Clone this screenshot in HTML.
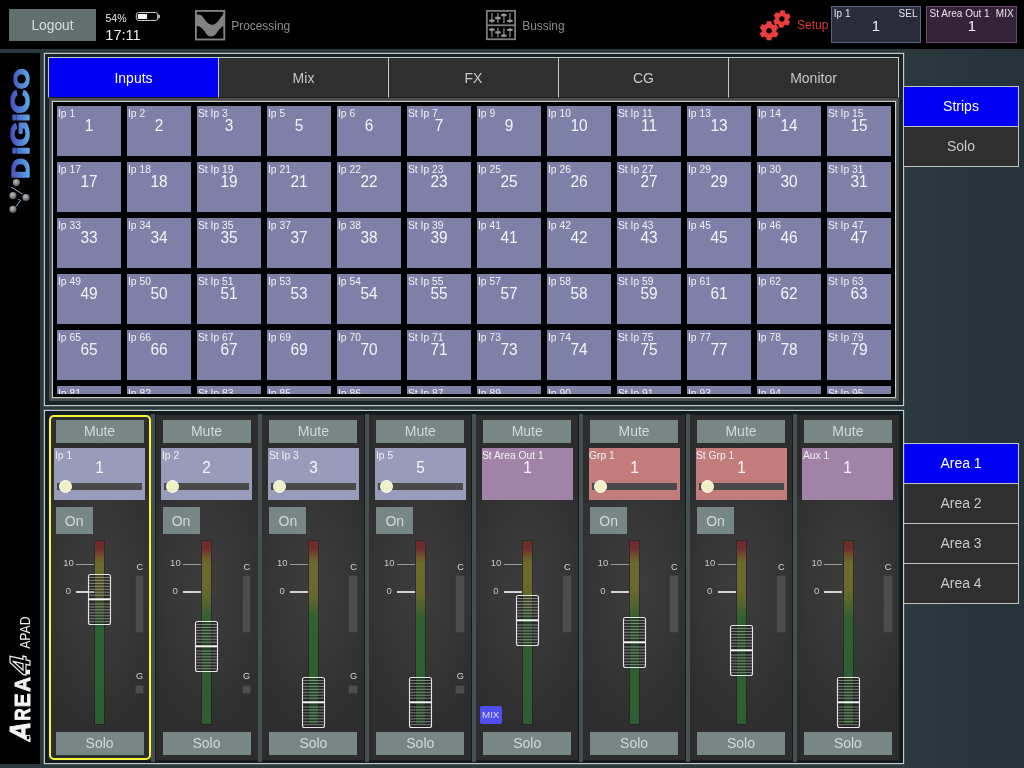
<!DOCTYPE html>
<html lang="en"><head><meta charset="utf-8"><title>DiGiCo Area4 aPad</title>
<style>
html,body{margin:0;padding:0}
body{will-change:transform;width:1024px;height:768px;overflow:hidden;position:relative;background:linear-gradient(90deg,#2b3a3f 0,#2b3a3f 88%,#243339 100%);font-family:"Liberation Sans",Arial,Helvetica,sans-serif;}
div{box-sizing:border-box}
.t{position:absolute;white-space:nowrap}
.btn{position:absolute;background:#778785;color:#d2d9d8;text-align:center}
.cell{position:absolute;width:64px;height:50px;background:#7f80a7}
.cl{left:1.4px;top:1.7px;font-size:10.2px;line-height:12px;color:#f0f0f6;transform:scaleX(1.01);transform-origin:0 0}
.cn{left:0;width:64px;text-align:center;top:9.9px;font-size:16.6px;line-height:20px;color:#f4f4f8;transform:scaleX(.93)}
.sb{position:absolute;left:903px;width:116px;height:41px;border:1px solid #bfc3c3;background:#2e2f2e;color:#c9c9c9;font-size:14px;line-height:39px;text-align:center}
.sb.on{background:#0000f5;color:#fff}
.tab{position:absolute;top:57px;height:41px;width:171px;border:1px solid #c4c8c8;border-bottom:1px solid #202222;background:#2e2f2e;color:#c9c9c9;font-size:14px;line-height:40px;text-align:center}
.tab.on{background:#0000f5;color:#fff}
.strip{position:absolute;top:415px;width:102px;height:345px;background:radial-gradient(ellipse 70px 150px at 50% 50%,#3d3d3d 0,#353535 60%,#2d2d2d 100%)}
.sep{position:absolute;top:414px;width:4px;height:348px;background:#464f52}
</style></head><body>

<div style="position:absolute;left:0px;top:0px;width:1024px;height:49px;background:#000"></div>
<div style="position:absolute;left:0px;top:53px;width:40px;height:711px;background:#000"></div>
<div class="btn" style="left:9px;top:9px;width:87px;height:31.5px;background:#5f706f;color:#d9dedd;font-size:13.8px;line-height:33px">Logout</div>
<div class="t" style="left:105.5px;top:12.06px;font-size:10.5px;line-height:13px;color:#e8e8e8;">54%</div>
<div class="t" style="left:105.3px;top:25.64px;font-size:14.6px;line-height:18px;color:#f0f0f0;">17:11</div>
<svg style="position:absolute;left:134px;top:10px" width="28" height="13" viewBox="0 0 28 13"><rect x="2.3" y="2.5" width="21.4" height="8" rx="2.3" fill="none" stroke="#c9c9c9" stroke-width="1"/><rect x="3.8" y="4" width="9.3" height="5" rx="0.8" fill="#f4f4f4"/><path d="M24.2 4.6 h0.6 a1 1 0 0 1 1 1 v1.8 a1 1 0 0 1 -1 1 h-0.6z" fill="#d8d8d8"/></svg>
<svg style="position:absolute;left:194px;top:9px" width="33" height="33" viewBox="0 0 33 33"><path d="M1.5 5.4 L4.5 5.4 C8.5 5.4 10 10 12.5 12.8 C14.5 15 16.5 15.8 18.4 15.8 C22 15.8 25 11 27.5 7.5 C28.8 5.8 29.8 4.8 30.5 3.2 L30.5 16.8 C27 17.5 24.5 21.5 22.5 24.2 C20.8 26.5 19 27.5 16.8 27.5 C14.2 27.5 12.6 25.5 11 23 C9 20 6.5 16.8 1.5 16.8 Z" fill="#828282"/><rect x="1.9" y="1.9" width="28.4" height="28.6" fill="none" stroke="#828282" stroke-width="1.9"/></svg>
<div class="t" style="left:231.3px;top:18.78px;font-size:11.9px;line-height:14px;color:#8d8d8d;">Processing</div>
<svg style="position:absolute;left:485px;top:9px" width="33" height="33" viewBox="0 0 33 33"><g fill="none" stroke="#7e7e7e" stroke-width="1.8"><rect x="1.85" y="1.85" width="28.25" height="28.4"/><path d="M1.85 16.3h28.25"/></g><g stroke="#6c6c6c" stroke-width="1.6"><path d="M6.9 4.1v9.9"/><path d="M6.9 18.7v9.6"/><path d="M12.9 4.1v9.9"/><path d="M12.9 18.7v9.6"/><path d="M18.9 4.1v9.9"/><path d="M18.9 18.7v9.6"/><path d="M24.9 4.1v9.9"/><path d="M24.9 18.7v9.6"/></g><g fill="#969696"><rect x="4.15" y="10.45" width="5.5" height="2.3" rx="0.6"/><rect x="4.15" y="19.55" width="5.5" height="2.3" rx="0.6"/><rect x="10.15" y="7.85" width="5.5" height="2.3" rx="0.6"/><rect x="10.15" y="22.25" width="5.5" height="2.3" rx="0.6"/><rect x="16.15" y="5.05" width="5.5" height="2.3" rx="0.6"/><rect x="16.15" y="25.45" width="5.5" height="2.3" rx="0.6"/><rect x="22.15" y="10.75" width="5.5" height="2.3" rx="0.6"/><rect x="22.15" y="19.75" width="5.5" height="2.3" rx="0.6"/></g></svg>
<div class="t" style="left:522.3px;top:18.78px;font-size:11.9px;line-height:14px;color:#8d8d8d;">Bussing</div>
<svg style="position:absolute;left:756px;top:6px" width="40" height="40" viewBox="756 6 40 40"><g fill="#ec3e3e" fill-rule="evenodd" stroke="#ec3e3e" stroke-width="1.2" stroke-linejoin="round"><path d="M772.50 36.69 L771.20 37.27 L770.99 39.70 L767.21 39.70 L767.00 37.27 L765.70 36.69 L764.55 35.85 L762.34 36.89 L760.45 33.61 L762.45 32.21 L762.30 30.80 L762.45 29.39 L760.45 27.99 L762.34 24.71 L764.55 25.75 L765.70 24.91 L767.00 24.33 L767.21 21.90 L770.99 21.90 L771.20 24.33 L772.50 24.91 L773.65 25.75 L775.86 24.71 L777.75 27.99 L775.75 29.39 L775.90 30.80 L775.75 32.21 L777.75 33.61 L775.86 36.89 L773.65 35.85Z M765.75 30.80 a3.35 3.35 0 1 0 6.7 0 a3.35 3.35 0 1 0 -6.7 0Z"/><path d="M784.50 24.63 L783.28 25.04 L782.89 27.24 L779.45 26.93 L779.46 24.70 L778.33 24.07 L777.35 23.22 L775.26 23.98 L773.81 20.84 L775.74 19.74 L775.73 18.44 L775.98 17.17 L774.27 15.74 L776.26 12.91 L778.18 14.04 L779.30 13.37 L780.52 12.96 L780.91 10.76 L784.35 11.07 L784.34 13.30 L785.47 13.93 L786.45 14.78 L788.54 14.02 L789.99 17.16 L788.06 18.26 L788.07 19.56 L787.82 20.83 L789.53 22.26 L787.54 25.09 L785.62 23.96Z M778.60 19.00 a3.3 3.3 0 1 0 6.6 0 a3.3 3.3 0 1 0 -6.6 0Z"/></g></svg>
<div class="t" style="left:797px;top:17.74px;font-size:12px;line-height:14px;color:#d93a3a;">Setup</div>
<div style="position:absolute;left:831px;top:6px;width:90px;height:37px;background:#2a2c3c;border:1px solid #5e638c"></div>
<div class="t" style="left:833.8px;top:7.64px;font-size:10px;line-height:12px;color:#e6e6ea;">Ip 1</div>
<div class="t" style="left:717.5px;width:200px;top:7.64px;font-size:10px;line-height:12px;color:#e6e6ea;text-align:right;">SEL</div>
<div class="t" style="left:776.0px;width:200px;top:17.40px;font-size:15px;line-height:18px;color:#f2f2f2;text-align:center;">1</div>
<div style="position:absolute;left:926px;top:6px;width:91px;height:37px;background:#35233a;border:1px solid #6e4a73"></div>
<div class="t" style="left:929.6px;top:7.64px;font-size:10px;line-height:12px;color:#e6e6ea;">St Area Out 1</div>
<div class="t" style="left:813.6px;width:200px;top:7.64px;font-size:10px;line-height:12px;color:#e6e6ea;text-align:right;">MIX</div>
<div class="t" style="left:872.0px;width:200px;top:17.40px;font-size:15px;line-height:18px;color:#f2f2f2;text-align:center;">1</div>
<svg style="position:absolute;left:0;top:56px" width="40" height="170" viewBox="0 56 40 170"><defs><linearGradient id="lg" gradientUnits="userSpaceOnUse" x1="0" y1="-20" x2="0" y2="0"><stop offset="0" stop-color="#4a46b8"/><stop offset="0.5" stop-color="#4c74cc"/><stop offset="1" stop-color="#5ea6e2"/></linearGradient><radialGradient id="ball" cx="0.4" cy="0.35" r="0.7"><stop offset="0" stop-color="#bdbdbd"/><stop offset="0.6" stop-color="#808080"/><stop offset="1" stop-color="#444"/></radialGradient></defs><text transform="translate(28.7 178.8) rotate(-90) scale(1.22 1)" font-family="Liberation Sans, Arial, sans-serif" font-weight="bold" font-size="23.4" fill="url(#lg)" stroke="url(#lg)" stroke-width="1.4" stroke-linejoin="round">D</text><text transform="translate(28.7 154.8) rotate(-90) scale(1.36 1)" font-family="Liberation Sans, Arial, sans-serif" font-weight="bold" font-size="21.6" fill="url(#lg)" stroke="url(#lg)" stroke-width="1.4" stroke-linejoin="round">i</text><text transform="translate(28.7 146.5) rotate(-90) scale(1.27 1)" font-family="Liberation Sans, Arial, sans-serif" font-weight="bold" font-size="25.4" fill="url(#lg)" stroke="url(#lg)" stroke-width="1.4" stroke-linejoin="round">G</text><text transform="translate(28.7 121.4) rotate(-90) scale(1.36 1)" font-family="Liberation Sans, Arial, sans-serif" font-weight="bold" font-size="21.6" fill="url(#lg)" stroke="url(#lg)" stroke-width="1.4" stroke-linejoin="round">i</text><text transform="translate(28.7 113.4) rotate(-90) scale(1.3 1)" font-family="Liberation Sans, Arial, sans-serif" font-weight="bold" font-size="25.4" fill="url(#lg)" stroke="url(#lg)" stroke-width="1.4" stroke-linejoin="round">C</text><text transform="translate(28.7 89.2) rotate(-90) scale(1.22 1)" font-family="Liberation Sans, Arial, sans-serif" font-weight="bold" font-size="21.8" fill="url(#lg)" stroke="url(#lg)" stroke-width="1.4" stroke-linejoin="round">O</text><g stroke="#8fb0d8" stroke-width="1" fill="none"><path d="M11.2 187 L22.6 194.2"/><path d="M18.4 199.3 L20.6 200.3 L16.2 206.3"/></g><g fill="url(#ball)"><circle cx="16.4" cy="182.6" r="3.6"/><circle cx="13" cy="195.6" r="3.6"/><circle cx="26" cy="197.5" r="3.6"/><circle cx="13" cy="209.3" r="3.6"/></g></svg>
<svg style="position:absolute;left:0;top:606px" width="40" height="150" viewBox="0 606 40 150"><text transform="translate(30.4 648.8) rotate(-90) scale(0.86 1)" font-family="Liberation Sans, Arial, sans-serif" font-weight="normal" font-size="14.2" fill="#f2f2f2" >APAD</text><text transform="translate(29.8 674.4) rotate(-90) scale(1.18 1)" font-family="Liberation Sans, Arial, sans-serif" font-weight="bold" font-size="29" fill="none" stroke="#f2f2f2" stroke-width="1.1" font-style="italic">4</text><rect x="26" y="669.8" width="4" height="4.6" fill="#f2f2f2"/><text transform="translate(30 691.8) rotate(-90) scale(0.93 1)" font-family="Liberation Sans, Arial, sans-serif" font-weight="bold" font-size="22" fill="#f4f4f4" stroke="#f4f4f4" stroke-width="0.9" stroke-linejoin="round">A</text><text transform="translate(30 707.2) rotate(-90) scale(0.94 1)" font-family="Liberation Sans, Arial, sans-serif" font-weight="bold" font-size="22" fill="#f4f4f4" stroke="#f4f4f4" stroke-width="0.9" stroke-linejoin="round">E</text><text transform="translate(30 720.4) rotate(-90) scale(0.76 1)" font-family="Liberation Sans, Arial, sans-serif" font-weight="bold" font-size="22" fill="#f4f4f4" stroke="#f4f4f4" stroke-width="0.9" stroke-linejoin="round">R</text><text transform="translate(30.2 741.2) rotate(-90) scale(0.93 1)" font-family="Liberation Sans, Arial, sans-serif" font-weight="bold" font-size="29" fill="#f4f4f4" stroke="#f4f4f4" stroke-width="0.9" stroke-linejoin="round" font-style="italic">A</text><rect x="26.4" y="735.4" width="3.4" height="4.4" fill="#000" stroke="#f4f4f4" stroke-width="0.9"/></svg>
<div style="position:absolute;left:44px;top:53px;width:860px;height:353px;border:1px solid #c6caca;background:#17242a;box-shadow:0 0 0 0.5px rgba(200,205,205,.35)"></div>
<div class="tab on" style="left:48px">Inputs</div>
<div class="tab" style="left:218px">Mix</div>
<div class="tab" style="left:388px">FX</div>
<div class="tab" style="left:558px">CG</div>
<div class="tab" style="left:728px">Monitor</div>
<div style="position:absolute;left:49px;top:98px;width:850px;height:303px;background:#4b4d4d"></div>
<div style="position:absolute;left:52px;top:101px;width:844px;height:297px;border:1px solid #c9cdcd;background:#000;overflow:hidden;box-shadow:0 0 0 0.5px rgba(200,205,205,.3)"><div style="position:absolute;left:0;top:0;width:842px;height:292px;overflow:hidden"><div class="cell" style="left:4px;top:4px"><div class="t cl">Ip 1</div><div class="t cn">1</div></div><div class="cell" style="left:74px;top:4px"><div class="t cl">Ip 2</div><div class="t cn">2</div></div><div class="cell" style="left:144px;top:4px"><div class="t cl">St Ip 3</div><div class="t cn">3</div></div><div class="cell" style="left:214px;top:4px"><div class="t cl">Ip 5</div><div class="t cn">5</div></div><div class="cell" style="left:284px;top:4px"><div class="t cl">Ip 6</div><div class="t cn">6</div></div><div class="cell" style="left:354px;top:4px"><div class="t cl">St Ip 7</div><div class="t cn">7</div></div><div class="cell" style="left:424px;top:4px"><div class="t cl">Ip 9</div><div class="t cn">9</div></div><div class="cell" style="left:494px;top:4px"><div class="t cl">Ip 10</div><div class="t cn">10</div></div><div class="cell" style="left:564px;top:4px"><div class="t cl">St Ip 11</div><div class="t cn">11</div></div><div class="cell" style="left:634px;top:4px"><div class="t cl">Ip 13</div><div class="t cn">13</div></div><div class="cell" style="left:704px;top:4px"><div class="t cl">Ip 14</div><div class="t cn">14</div></div><div class="cell" style="left:774px;top:4px"><div class="t cl">St Ip 15</div><div class="t cn">15</div></div><div class="cell" style="left:4px;top:60px"><div class="t cl">Ip 17</div><div class="t cn">17</div></div><div class="cell" style="left:74px;top:60px"><div class="t cl">Ip 18</div><div class="t cn">18</div></div><div class="cell" style="left:144px;top:60px"><div class="t cl">St Ip 19</div><div class="t cn">19</div></div><div class="cell" style="left:214px;top:60px"><div class="t cl">Ip 21</div><div class="t cn">21</div></div><div class="cell" style="left:284px;top:60px"><div class="t cl">Ip 22</div><div class="t cn">22</div></div><div class="cell" style="left:354px;top:60px"><div class="t cl">St Ip 23</div><div class="t cn">23</div></div><div class="cell" style="left:424px;top:60px"><div class="t cl">Ip 25</div><div class="t cn">25</div></div><div class="cell" style="left:494px;top:60px"><div class="t cl">Ip 26</div><div class="t cn">26</div></div><div class="cell" style="left:564px;top:60px"><div class="t cl">St Ip 27</div><div class="t cn">27</div></div><div class="cell" style="left:634px;top:60px"><div class="t cl">Ip 29</div><div class="t cn">29</div></div><div class="cell" style="left:704px;top:60px"><div class="t cl">Ip 30</div><div class="t cn">30</div></div><div class="cell" style="left:774px;top:60px"><div class="t cl">St Ip 31</div><div class="t cn">31</div></div><div class="cell" style="left:4px;top:116px"><div class="t cl">Ip 33</div><div class="t cn">33</div></div><div class="cell" style="left:74px;top:116px"><div class="t cl">Ip 34</div><div class="t cn">34</div></div><div class="cell" style="left:144px;top:116px"><div class="t cl">St Ip 35</div><div class="t cn">35</div></div><div class="cell" style="left:214px;top:116px"><div class="t cl">Ip 37</div><div class="t cn">37</div></div><div class="cell" style="left:284px;top:116px"><div class="t cl">Ip 38</div><div class="t cn">38</div></div><div class="cell" style="left:354px;top:116px"><div class="t cl">St Ip 39</div><div class="t cn">39</div></div><div class="cell" style="left:424px;top:116px"><div class="t cl">Ip 41</div><div class="t cn">41</div></div><div class="cell" style="left:494px;top:116px"><div class="t cl">Ip 42</div><div class="t cn">42</div></div><div class="cell" style="left:564px;top:116px"><div class="t cl">St Ip 43</div><div class="t cn">43</div></div><div class="cell" style="left:634px;top:116px"><div class="t cl">Ip 45</div><div class="t cn">45</div></div><div class="cell" style="left:704px;top:116px"><div class="t cl">Ip 46</div><div class="t cn">46</div></div><div class="cell" style="left:774px;top:116px"><div class="t cl">St Ip 47</div><div class="t cn">47</div></div><div class="cell" style="left:4px;top:172px"><div class="t cl">Ip 49</div><div class="t cn">49</div></div><div class="cell" style="left:74px;top:172px"><div class="t cl">Ip 50</div><div class="t cn">50</div></div><div class="cell" style="left:144px;top:172px"><div class="t cl">St Ip 51</div><div class="t cn">51</div></div><div class="cell" style="left:214px;top:172px"><div class="t cl">Ip 53</div><div class="t cn">53</div></div><div class="cell" style="left:284px;top:172px"><div class="t cl">Ip 54</div><div class="t cn">54</div></div><div class="cell" style="left:354px;top:172px"><div class="t cl">St Ip 55</div><div class="t cn">55</div></div><div class="cell" style="left:424px;top:172px"><div class="t cl">Ip 57</div><div class="t cn">57</div></div><div class="cell" style="left:494px;top:172px"><div class="t cl">Ip 58</div><div class="t cn">58</div></div><div class="cell" style="left:564px;top:172px"><div class="t cl">St Ip 59</div><div class="t cn">59</div></div><div class="cell" style="left:634px;top:172px"><div class="t cl">Ip 61</div><div class="t cn">61</div></div><div class="cell" style="left:704px;top:172px"><div class="t cl">Ip 62</div><div class="t cn">62</div></div><div class="cell" style="left:774px;top:172px"><div class="t cl">St Ip 63</div><div class="t cn">63</div></div><div class="cell" style="left:4px;top:228px"><div class="t cl">Ip 65</div><div class="t cn">65</div></div><div class="cell" style="left:74px;top:228px"><div class="t cl">Ip 66</div><div class="t cn">66</div></div><div class="cell" style="left:144px;top:228px"><div class="t cl">St Ip 67</div><div class="t cn">67</div></div><div class="cell" style="left:214px;top:228px"><div class="t cl">Ip 69</div><div class="t cn">69</div></div><div class="cell" style="left:284px;top:228px"><div class="t cl">Ip 70</div><div class="t cn">70</div></div><div class="cell" style="left:354px;top:228px"><div class="t cl">St Ip 71</div><div class="t cn">71</div></div><div class="cell" style="left:424px;top:228px"><div class="t cl">Ip 73</div><div class="t cn">73</div></div><div class="cell" style="left:494px;top:228px"><div class="t cl">Ip 74</div><div class="t cn">74</div></div><div class="cell" style="left:564px;top:228px"><div class="t cl">St Ip 75</div><div class="t cn">75</div></div><div class="cell" style="left:634px;top:228px"><div class="t cl">Ip 77</div><div class="t cn">77</div></div><div class="cell" style="left:704px;top:228px"><div class="t cl">Ip 78</div><div class="t cn">78</div></div><div class="cell" style="left:774px;top:228px"><div class="t cl">St Ip 79</div><div class="t cn">79</div></div><div class="cell" style="left:4px;top:284px"><div class="t cl">Ip 81</div><div class="t cn">81</div></div><div class="cell" style="left:74px;top:284px"><div class="t cl">Ip 82</div><div class="t cn">82</div></div><div class="cell" style="left:144px;top:284px"><div class="t cl">St Ip 83</div><div class="t cn">83</div></div><div class="cell" style="left:214px;top:284px"><div class="t cl">Ip 85</div><div class="t cn">85</div></div><div class="cell" style="left:284px;top:284px"><div class="t cl">Ip 86</div><div class="t cn">86</div></div><div class="cell" style="left:354px;top:284px"><div class="t cl">St Ip 87</div><div class="t cn">87</div></div><div class="cell" style="left:424px;top:284px"><div class="t cl">Ip 89</div><div class="t cn">89</div></div><div class="cell" style="left:494px;top:284px"><div class="t cl">Ip 90</div><div class="t cn">90</div></div><div class="cell" style="left:564px;top:284px"><div class="t cl">St Ip 91</div><div class="t cn">91</div></div><div class="cell" style="left:634px;top:284px"><div class="t cl">Ip 93</div><div class="t cn">93</div></div><div class="cell" style="left:704px;top:284px"><div class="t cl">Ip 94</div><div class="t cn">94</div></div><div class="cell" style="left:774px;top:284px"><div class="t cl">St Ip 95</div><div class="t cn">95</div></div></div></div>
<div class="sb on" style="top:86px">Strips</div>
<div class="sb" style="top:126px">Solo</div>
<div class="sb on" style="top:443px">Area 1</div>
<div class="sb" style="top:483px">Area 2</div>
<div class="sb" style="top:523px">Area 3</div>
<div class="sb" style="top:563px">Area 4</div>
<div style="position:absolute;left:44px;top:410px;width:860px;height:354px;border:1px solid #c6caca;background:#111c20;box-shadow:0 0 0 0.5px rgba(200,205,205,.35)"></div>
<div class="strip" style="left:48.6px"><div class="btn" style="left:7px;top:5px;width:88px;height:23px;font-size:14px;line-height:23px">Mute</div><div style="position:absolute;left:5.6px;top:33px;width:91px;height:52px;background:#999bbb"><div class="t cl" style="left:0.7px;top:1.9px;color:#f0f0f4">Ip 1</div><div class="t cn" style="width:91px;top:9.7px;color:#f6f6fa">1</div><div style="position:absolute;left:3px;top:35px;width:85px;height:7px;background:#4a4a4a"></div><div style="position:absolute;left:5.2px;top:32px;width:13px;height:13px;border-radius:50%;background:#f0f0c6;border:1px solid #fbfbee"></div></div><div class="btn" style="left:7px;top:91.5px;width:37px;height:27.5px;font-size:14px;line-height:28px">On</div><div style="position:absolute;left:46.7px;top:125.5px;width:9px;height:183.5px;background:linear-gradient(180deg,#702a2a 0,#712d2a 4%,#70552c 8.5%,#6e6a2c 12.5%,#69682c 28%,#50642e 35%,#2f6030 42%,#2d5e2f 100%);box-shadow:0 0 0 1px rgba(0,0,0,.22)"></div><div class="t" style="left:14.6px;top:142.20000000000005px;font-size:9.5px;line-height:12px;color:#c6c6c6">10</div><div style="position:absolute;left:27.5px;top:149px;width:18px;height:1px;background:#9a9a9a"></div><div class="t" style="left:17.1px;top:170.20000000000005px;font-size:9.5px;line-height:12px;color:#c6c6c6">0</div><div style="position:absolute;left:27.5px;top:176px;width:18px;height:2px;background:#d4d4d4"></div><div class="t" style="left:87.9px;top:146.39999999999998px;font-size:9.2px;line-height:12px;color:#d8d8d8">C</div><div style="position:absolute;left:86.1px;top:160px;width:9.6px;height:57.5px;background:#4d4d4d;border:1px solid #3a3a3a"></div><div class="t" style="left:87.5px;top:255.39999999999998px;font-size:9.2px;line-height:12px;color:#d8d8d8">G</div><div style="position:absolute;left:86.1px;top:270px;width:9.6px;height:9px;background:#4d4d4d;border:1px solid #3a3a3a"></div><svg style="position:absolute;left:38.7px;top:157.7px" width="25" height="53" viewBox="0 0 25 53"><rect x="1.5" y="1.5" width="22" height="50" rx="2" fill="#000" fill-opacity="0.28"/><g stroke="#e0e0e0" stroke-opacity="0.5" stroke-width="1"><path d="M2 4.45h21"/><path d="M2 7.40h21"/><path d="M2 10.35h21"/><path d="M2 13.30h21"/><path d="M2 16.25h21"/><path d="M2 19.20h21"/><path d="M2 22.15h21"/><path d="M2 31.00h21"/><path d="M2 33.95h21"/><path d="M2 36.90h21"/><path d="M2 39.85h21"/><path d="M2 42.80h21"/><path d="M2 45.75h21"/><path d="M2 48.70h21"/></g><path d="M1.5 26.3h22" stroke="#f6f6f6" stroke-width="2"/><rect x="1.5" y="1.5" width="22" height="50" rx="2" fill="none" stroke="#e6e6e6" stroke-width="1.1"/></svg><div class="btn" style="left:7px;top:316.5px;width:88px;height:23px;font-size:14px;line-height:23px">Solo</div><div style="position:absolute;left:0;top:0;width:102px;height:345px;border:2.4px solid #f6f63a;border-radius:5px"></div></div>
<div class="sep" style="left:151.1px"></div>
<div class="strip" style="left:155.5px"><div class="btn" style="left:7px;top:5px;width:88px;height:23px;font-size:14px;line-height:23px">Mute</div><div style="position:absolute;left:5.6px;top:33px;width:91px;height:52px;background:#999bbb"><div class="t cl" style="left:0.7px;top:1.9px;color:#f0f0f4">Ip 2</div><div class="t cn" style="width:91px;top:9.7px;color:#f6f6fa">2</div><div style="position:absolute;left:3px;top:35px;width:85px;height:7px;background:#4a4a4a"></div><div style="position:absolute;left:5.2px;top:32px;width:13px;height:13px;border-radius:50%;background:#f0f0c6;border:1px solid #fbfbee"></div></div><div class="btn" style="left:7px;top:91.5px;width:37px;height:27.5px;font-size:14px;line-height:28px">On</div><div style="position:absolute;left:46.7px;top:125.5px;width:9px;height:183.5px;background:linear-gradient(180deg,#702a2a 0,#712d2a 4%,#70552c 8.5%,#6e6a2c 12.5%,#69682c 28%,#50642e 35%,#2f6030 42%,#2d5e2f 100%);box-shadow:0 0 0 1px rgba(0,0,0,.22)"></div><div class="t" style="left:14.6px;top:142.20000000000005px;font-size:9.5px;line-height:12px;color:#c6c6c6">10</div><div style="position:absolute;left:27.5px;top:149px;width:18px;height:1px;background:#9a9a9a"></div><div class="t" style="left:17.1px;top:170.20000000000005px;font-size:9.5px;line-height:12px;color:#c6c6c6">0</div><div style="position:absolute;left:27.5px;top:176px;width:18px;height:2px;background:#d4d4d4"></div><div class="t" style="left:87.9px;top:146.39999999999998px;font-size:9.2px;line-height:12px;color:#d8d8d8">C</div><div style="position:absolute;left:86.1px;top:160px;width:9.6px;height:57.5px;background:#4d4d4d;border:1px solid #3a3a3a"></div><div class="t" style="left:87.5px;top:255.39999999999998px;font-size:9.2px;line-height:12px;color:#d8d8d8">G</div><div style="position:absolute;left:86.1px;top:270px;width:9.6px;height:9px;background:#4d4d4d;border:1px solid #3a3a3a"></div><svg style="position:absolute;left:38.7px;top:204.7px" width="25" height="53" viewBox="0 0 25 53"><rect x="1.5" y="1.5" width="22" height="50" rx="2" fill="#000" fill-opacity="0.28"/><g stroke="#e0e0e0" stroke-opacity="0.5" stroke-width="1"><path d="M2 4.45h21"/><path d="M2 7.40h21"/><path d="M2 10.35h21"/><path d="M2 13.30h21"/><path d="M2 16.25h21"/><path d="M2 19.20h21"/><path d="M2 22.15h21"/><path d="M2 31.00h21"/><path d="M2 33.95h21"/><path d="M2 36.90h21"/><path d="M2 39.85h21"/><path d="M2 42.80h21"/><path d="M2 45.75h21"/><path d="M2 48.70h21"/></g><path d="M1.5 26.3h22" stroke="#f6f6f6" stroke-width="2"/><rect x="1.5" y="1.5" width="22" height="50" rx="2" fill="none" stroke="#e6e6e6" stroke-width="1.1"/></svg><div class="btn" style="left:7px;top:316.5px;width:88px;height:23px;font-size:14px;line-height:23px">Solo</div></div>
<div class="sep" style="left:258.0px"></div>
<div class="strip" style="left:262.4px"><div class="btn" style="left:7px;top:5px;width:88px;height:23px;font-size:14px;line-height:23px">Mute</div><div style="position:absolute;left:5.6px;top:33px;width:91px;height:52px;background:#999bbb"><div class="t cl" style="left:0.7px;top:1.9px;color:#f0f0f4">St Ip 3</div><div class="t cn" style="width:91px;top:9.7px;color:#f6f6fa">3</div><div style="position:absolute;left:3px;top:35px;width:85px;height:7px;background:#4a4a4a"></div><div style="position:absolute;left:5.2px;top:32px;width:13px;height:13px;border-radius:50%;background:#f0f0c6;border:1px solid #fbfbee"></div></div><div class="btn" style="left:7px;top:91.5px;width:37px;height:27.5px;font-size:14px;line-height:28px">On</div><div style="position:absolute;left:46.7px;top:125.5px;width:9px;height:183.5px;background:linear-gradient(180deg,#702a2a 0,#712d2a 4%,#70552c 8.5%,#6e6a2c 12.5%,#69682c 28%,#50642e 35%,#2f6030 42%,#2d5e2f 100%);box-shadow:0 0 0 1px rgba(0,0,0,.22)"></div><div class="t" style="left:14.6px;top:142.20000000000005px;font-size:9.5px;line-height:12px;color:#c6c6c6">10</div><div style="position:absolute;left:27.5px;top:149px;width:18px;height:1px;background:#9a9a9a"></div><div class="t" style="left:17.1px;top:170.20000000000005px;font-size:9.5px;line-height:12px;color:#c6c6c6">0</div><div style="position:absolute;left:27.5px;top:176px;width:18px;height:2px;background:#d4d4d4"></div><div class="t" style="left:87.9px;top:146.39999999999998px;font-size:9.2px;line-height:12px;color:#d8d8d8">C</div><div style="position:absolute;left:86.1px;top:160px;width:9.6px;height:57.5px;background:#4d4d4d;border:1px solid #3a3a3a"></div><div class="t" style="left:87.5px;top:255.39999999999998px;font-size:9.2px;line-height:12px;color:#d8d8d8">G</div><div style="position:absolute;left:86.1px;top:270px;width:9.6px;height:9px;background:#4d4d4d;border:1px solid #3a3a3a"></div><svg style="position:absolute;left:38.7px;top:260.7px" width="25" height="53" viewBox="0 0 25 53"><rect x="1.5" y="1.5" width="22" height="50" rx="2" fill="#000" fill-opacity="0.28"/><g stroke="#e0e0e0" stroke-opacity="0.5" stroke-width="1"><path d="M2 4.45h21"/><path d="M2 7.40h21"/><path d="M2 10.35h21"/><path d="M2 13.30h21"/><path d="M2 16.25h21"/><path d="M2 19.20h21"/><path d="M2 22.15h21"/><path d="M2 31.00h21"/><path d="M2 33.95h21"/><path d="M2 36.90h21"/><path d="M2 39.85h21"/><path d="M2 42.80h21"/><path d="M2 45.75h21"/><path d="M2 48.70h21"/></g><path d="M1.5 26.3h22" stroke="#f6f6f6" stroke-width="2"/><rect x="1.5" y="1.5" width="22" height="50" rx="2" fill="none" stroke="#e6e6e6" stroke-width="1.1"/></svg><div class="btn" style="left:7px;top:316.5px;width:88px;height:23px;font-size:14px;line-height:23px">Solo</div></div>
<div class="sep" style="left:364.9px"></div>
<div class="strip" style="left:369.3px"><div class="btn" style="left:7px;top:5px;width:88px;height:23px;font-size:14px;line-height:23px">Mute</div><div style="position:absolute;left:5.6px;top:33px;width:91px;height:52px;background:#999bbb"><div class="t cl" style="left:0.7px;top:1.9px;color:#f0f0f4">Ip 5</div><div class="t cn" style="width:91px;top:9.7px;color:#f6f6fa">5</div><div style="position:absolute;left:3px;top:35px;width:85px;height:7px;background:#4a4a4a"></div><div style="position:absolute;left:5.2px;top:32px;width:13px;height:13px;border-radius:50%;background:#f0f0c6;border:1px solid #fbfbee"></div></div><div class="btn" style="left:7px;top:91.5px;width:37px;height:27.5px;font-size:14px;line-height:28px">On</div><div style="position:absolute;left:46.7px;top:125.5px;width:9px;height:183.5px;background:linear-gradient(180deg,#702a2a 0,#712d2a 4%,#70552c 8.5%,#6e6a2c 12.5%,#69682c 28%,#50642e 35%,#2f6030 42%,#2d5e2f 100%);box-shadow:0 0 0 1px rgba(0,0,0,.22)"></div><div class="t" style="left:14.6px;top:142.20000000000005px;font-size:9.5px;line-height:12px;color:#c6c6c6">10</div><div style="position:absolute;left:27.5px;top:149px;width:18px;height:1px;background:#9a9a9a"></div><div class="t" style="left:17.1px;top:170.20000000000005px;font-size:9.5px;line-height:12px;color:#c6c6c6">0</div><div style="position:absolute;left:27.5px;top:176px;width:18px;height:2px;background:#d4d4d4"></div><div class="t" style="left:87.9px;top:146.39999999999998px;font-size:9.2px;line-height:12px;color:#d8d8d8">C</div><div style="position:absolute;left:86.1px;top:160px;width:9.6px;height:57.5px;background:#4d4d4d;border:1px solid #3a3a3a"></div><div class="t" style="left:87.5px;top:255.39999999999998px;font-size:9.2px;line-height:12px;color:#d8d8d8">G</div><div style="position:absolute;left:86.1px;top:270px;width:9.6px;height:9px;background:#4d4d4d;border:1px solid #3a3a3a"></div><svg style="position:absolute;left:38.7px;top:260.7px" width="25" height="53" viewBox="0 0 25 53"><rect x="1.5" y="1.5" width="22" height="50" rx="2" fill="#000" fill-opacity="0.28"/><g stroke="#e0e0e0" stroke-opacity="0.5" stroke-width="1"><path d="M2 4.45h21"/><path d="M2 7.40h21"/><path d="M2 10.35h21"/><path d="M2 13.30h21"/><path d="M2 16.25h21"/><path d="M2 19.20h21"/><path d="M2 22.15h21"/><path d="M2 31.00h21"/><path d="M2 33.95h21"/><path d="M2 36.90h21"/><path d="M2 39.85h21"/><path d="M2 42.80h21"/><path d="M2 45.75h21"/><path d="M2 48.70h21"/></g><path d="M1.5 26.3h22" stroke="#f6f6f6" stroke-width="2"/><rect x="1.5" y="1.5" width="22" height="50" rx="2" fill="none" stroke="#e6e6e6" stroke-width="1.1"/></svg><div class="btn" style="left:7px;top:316.5px;width:88px;height:23px;font-size:14px;line-height:23px">Solo</div></div>
<div class="sep" style="left:471.8px"></div>
<div class="strip" style="left:476.2px"><div class="btn" style="left:7px;top:5px;width:88px;height:23px;font-size:14px;line-height:23px">Mute</div><div style="position:absolute;left:5.6px;top:33px;width:91px;height:52px;background:#a283a8"><div class="t cl" style="left:0.7px;top:1.9px;color:#f0f0f4">St Area Out 1</div><div class="t cn" style="width:91px;top:9.7px;color:#f6f6fa">1</div></div><div style="position:absolute;left:46.7px;top:125.5px;width:9px;height:183.5px;background:linear-gradient(180deg,#702a2a 0,#712d2a 4%,#70552c 8.5%,#6e6a2c 12.5%,#69682c 28%,#50642e 35%,#2f6030 42%,#2d5e2f 100%);box-shadow:0 0 0 1px rgba(0,0,0,.22)"></div><div class="t" style="left:14.6px;top:142.20000000000005px;font-size:9.5px;line-height:12px;color:#c6c6c6">10</div><div style="position:absolute;left:27.5px;top:149px;width:18px;height:1px;background:#9a9a9a"></div><div class="t" style="left:17.1px;top:170.20000000000005px;font-size:9.5px;line-height:12px;color:#c6c6c6">0</div><div style="position:absolute;left:27.5px;top:176px;width:18px;height:2px;background:#d4d4d4"></div><div class="t" style="left:87.9px;top:146.39999999999998px;font-size:9.2px;line-height:12px;color:#d8d8d8">C</div><div style="position:absolute;left:86.1px;top:160px;width:9.6px;height:57.5px;background:#4d4d4d;border:1px solid #3a3a3a"></div><div style="position:absolute;left:3.5px;top:290.5px;width:22px;height:18.5px;border-radius:2px;background:#4e4ef0;color:#dcdcfa;font-size:9.8px;line-height:18.5px;text-align:center">MIX</div><svg style="position:absolute;left:38.7px;top:178.7px" width="25" height="53" viewBox="0 0 25 53"><rect x="1.5" y="1.5" width="22" height="50" rx="2" fill="#000" fill-opacity="0.28"/><g stroke="#e0e0e0" stroke-opacity="0.5" stroke-width="1"><path d="M2 4.45h21"/><path d="M2 7.40h21"/><path d="M2 10.35h21"/><path d="M2 13.30h21"/><path d="M2 16.25h21"/><path d="M2 19.20h21"/><path d="M2 22.15h21"/><path d="M2 31.00h21"/><path d="M2 33.95h21"/><path d="M2 36.90h21"/><path d="M2 39.85h21"/><path d="M2 42.80h21"/><path d="M2 45.75h21"/><path d="M2 48.70h21"/></g><path d="M1.5 26.3h22" stroke="#f6f6f6" stroke-width="2"/><rect x="1.5" y="1.5" width="22" height="50" rx="2" fill="none" stroke="#e6e6e6" stroke-width="1.1"/></svg><div class="btn" style="left:7px;top:316.5px;width:88px;height:23px;font-size:14px;line-height:23px">Solo</div></div>
<div class="sep" style="left:578.7px"></div>
<div class="strip" style="left:583.1px"><div class="btn" style="left:7px;top:5px;width:88px;height:23px;font-size:14px;line-height:23px">Mute</div><div style="position:absolute;left:5.6px;top:33px;width:91px;height:52px;background:#c27c7c"><div class="t cl" style="left:0.7px;top:1.9px;color:#f0f0f4">Grp 1</div><div class="t cn" style="width:91px;top:9.7px;color:#f6f6fa">1</div><div style="position:absolute;left:3px;top:35px;width:85px;height:7px;background:#4a4a4a"></div><div style="position:absolute;left:5.2px;top:32px;width:13px;height:13px;border-radius:50%;background:#f0f0c6;border:1px solid #fbfbee"></div></div><div class="btn" style="left:7px;top:91.5px;width:37px;height:27.5px;font-size:14px;line-height:28px">On</div><div style="position:absolute;left:46.7px;top:125.5px;width:9px;height:183.5px;background:linear-gradient(180deg,#702a2a 0,#712d2a 4%,#70552c 8.5%,#6e6a2c 12.5%,#69682c 28%,#50642e 35%,#2f6030 42%,#2d5e2f 100%);box-shadow:0 0 0 1px rgba(0,0,0,.22)"></div><div class="t" style="left:14.6px;top:142.20000000000005px;font-size:9.5px;line-height:12px;color:#c6c6c6">10</div><div style="position:absolute;left:27.5px;top:149px;width:18px;height:1px;background:#9a9a9a"></div><div class="t" style="left:17.1px;top:170.20000000000005px;font-size:9.5px;line-height:12px;color:#c6c6c6">0</div><div style="position:absolute;left:27.5px;top:176px;width:18px;height:2px;background:#d4d4d4"></div><div class="t" style="left:87.9px;top:146.39999999999998px;font-size:9.2px;line-height:12px;color:#d8d8d8">C</div><div style="position:absolute;left:86.1px;top:160px;width:9.6px;height:57.5px;background:#4d4d4d;border:1px solid #3a3a3a"></div><svg style="position:absolute;left:38.7px;top:200.7px" width="25" height="53" viewBox="0 0 25 53"><rect x="1.5" y="1.5" width="22" height="50" rx="2" fill="#000" fill-opacity="0.28"/><g stroke="#e0e0e0" stroke-opacity="0.5" stroke-width="1"><path d="M2 4.45h21"/><path d="M2 7.40h21"/><path d="M2 10.35h21"/><path d="M2 13.30h21"/><path d="M2 16.25h21"/><path d="M2 19.20h21"/><path d="M2 22.15h21"/><path d="M2 31.00h21"/><path d="M2 33.95h21"/><path d="M2 36.90h21"/><path d="M2 39.85h21"/><path d="M2 42.80h21"/><path d="M2 45.75h21"/><path d="M2 48.70h21"/></g><path d="M1.5 26.3h22" stroke="#f6f6f6" stroke-width="2"/><rect x="1.5" y="1.5" width="22" height="50" rx="2" fill="none" stroke="#e6e6e6" stroke-width="1.1"/></svg><div class="btn" style="left:7px;top:316.5px;width:88px;height:23px;font-size:14px;line-height:23px">Solo</div></div>
<div class="sep" style="left:685.6px"></div>
<div class="strip" style="left:690.0px"><div class="btn" style="left:7px;top:5px;width:88px;height:23px;font-size:14px;line-height:23px">Mute</div><div style="position:absolute;left:5.6px;top:33px;width:91px;height:52px;background:#c27c7c"><div class="t cl" style="left:0.7px;top:1.9px;color:#f0f0f4">St Grp 1</div><div class="t cn" style="width:91px;top:9.7px;color:#f6f6fa">1</div><div style="position:absolute;left:3px;top:35px;width:85px;height:7px;background:#4a4a4a"></div><div style="position:absolute;left:5.2px;top:32px;width:13px;height:13px;border-radius:50%;background:#f0f0c6;border:1px solid #fbfbee"></div></div><div class="btn" style="left:7px;top:91.5px;width:37px;height:27.5px;font-size:14px;line-height:28px">On</div><div style="position:absolute;left:46.7px;top:125.5px;width:9px;height:183.5px;background:linear-gradient(180deg,#702a2a 0,#712d2a 4%,#70552c 8.5%,#6e6a2c 12.5%,#69682c 28%,#50642e 35%,#2f6030 42%,#2d5e2f 100%);box-shadow:0 0 0 1px rgba(0,0,0,.22)"></div><div class="t" style="left:14.6px;top:142.20000000000005px;font-size:9.5px;line-height:12px;color:#c6c6c6">10</div><div style="position:absolute;left:27.5px;top:149px;width:18px;height:1px;background:#9a9a9a"></div><div class="t" style="left:17.1px;top:170.20000000000005px;font-size:9.5px;line-height:12px;color:#c6c6c6">0</div><div style="position:absolute;left:27.5px;top:176px;width:18px;height:2px;background:#d4d4d4"></div><div class="t" style="left:87.9px;top:146.39999999999998px;font-size:9.2px;line-height:12px;color:#d8d8d8">C</div><div style="position:absolute;left:86.1px;top:160px;width:9.6px;height:57.5px;background:#4d4d4d;border:1px solid #3a3a3a"></div><svg style="position:absolute;left:38.7px;top:208.7px" width="25" height="53" viewBox="0 0 25 53"><rect x="1.5" y="1.5" width="22" height="50" rx="2" fill="#000" fill-opacity="0.28"/><g stroke="#e0e0e0" stroke-opacity="0.5" stroke-width="1"><path d="M2 4.45h21"/><path d="M2 7.40h21"/><path d="M2 10.35h21"/><path d="M2 13.30h21"/><path d="M2 16.25h21"/><path d="M2 19.20h21"/><path d="M2 22.15h21"/><path d="M2 31.00h21"/><path d="M2 33.95h21"/><path d="M2 36.90h21"/><path d="M2 39.85h21"/><path d="M2 42.80h21"/><path d="M2 45.75h21"/><path d="M2 48.70h21"/></g><path d="M1.5 26.3h22" stroke="#f6f6f6" stroke-width="2"/><rect x="1.5" y="1.5" width="22" height="50" rx="2" fill="none" stroke="#e6e6e6" stroke-width="1.1"/></svg><div class="btn" style="left:7px;top:316.5px;width:88px;height:23px;font-size:14px;line-height:23px">Solo</div></div>
<div class="sep" style="left:792.5px"></div>
<div class="strip" style="left:796.9px"><div class="btn" style="left:7px;top:5px;width:88px;height:23px;font-size:14px;line-height:23px">Mute</div><div style="position:absolute;left:5.6px;top:33px;width:91px;height:52px;background:#a283a8"><div class="t cl" style="left:0.7px;top:1.9px;color:#f0f0f4">Aux 1</div><div class="t cn" style="width:91px;top:9.7px;color:#f6f6fa">1</div></div><div style="position:absolute;left:46.7px;top:125.5px;width:9px;height:183.5px;background:linear-gradient(180deg,#702a2a 0,#712d2a 4%,#70552c 8.5%,#6e6a2c 12.5%,#69682c 28%,#50642e 35%,#2f6030 42%,#2d5e2f 100%);box-shadow:0 0 0 1px rgba(0,0,0,.22)"></div><div class="t" style="left:14.6px;top:142.20000000000005px;font-size:9.5px;line-height:12px;color:#c6c6c6">10</div><div style="position:absolute;left:27.5px;top:149px;width:18px;height:1px;background:#9a9a9a"></div><div class="t" style="left:17.1px;top:170.20000000000005px;font-size:9.5px;line-height:12px;color:#c6c6c6">0</div><div style="position:absolute;left:27.5px;top:176px;width:18px;height:2px;background:#d4d4d4"></div><div class="t" style="left:87.9px;top:146.39999999999998px;font-size:9.2px;line-height:12px;color:#d8d8d8">C</div><div style="position:absolute;left:86.1px;top:160px;width:9.6px;height:57.5px;background:#4d4d4d;border:1px solid #3a3a3a"></div><svg style="position:absolute;left:38.7px;top:260.7px" width="25" height="53" viewBox="0 0 25 53"><rect x="1.5" y="1.5" width="22" height="50" rx="2" fill="#000" fill-opacity="0.28"/><g stroke="#e0e0e0" stroke-opacity="0.5" stroke-width="1"><path d="M2 4.45h21"/><path d="M2 7.40h21"/><path d="M2 10.35h21"/><path d="M2 13.30h21"/><path d="M2 16.25h21"/><path d="M2 19.20h21"/><path d="M2 22.15h21"/><path d="M2 31.00h21"/><path d="M2 33.95h21"/><path d="M2 36.90h21"/><path d="M2 39.85h21"/><path d="M2 42.80h21"/><path d="M2 45.75h21"/><path d="M2 48.70h21"/></g><path d="M1.5 26.3h22" stroke="#f6f6f6" stroke-width="2"/><rect x="1.5" y="1.5" width="22" height="50" rx="2" fill="none" stroke="#e6e6e6" stroke-width="1.1"/></svg><div class="btn" style="left:7px;top:316.5px;width:88px;height:23px;font-size:14px;line-height:23px">Solo</div></div>
</body></html>
